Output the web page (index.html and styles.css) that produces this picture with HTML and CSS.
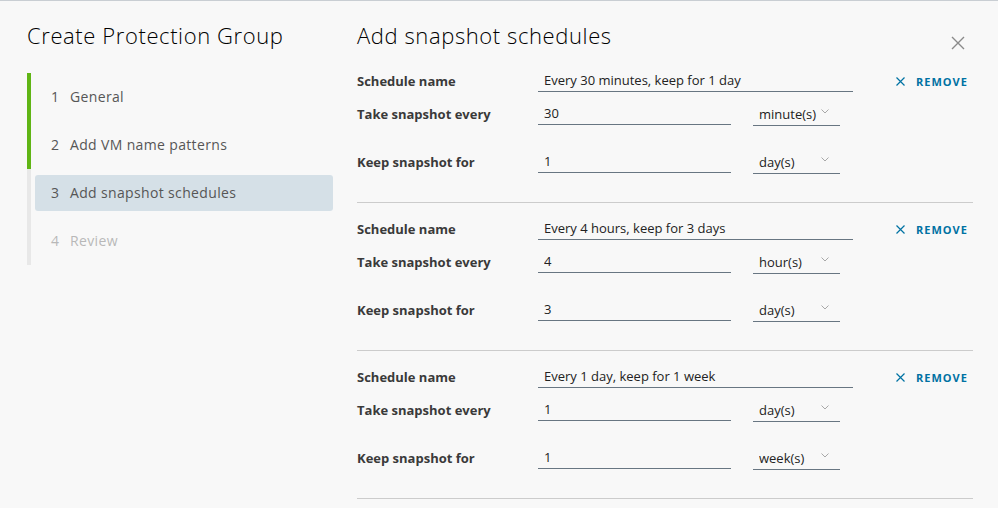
FILE: index.html
```html
<!DOCTYPE html>
<html lang="en">
<head>
    <meta charset="UTF-8">
    <meta name="viewport" content="width=device-width, initial-scale=1.0">
    <title>Create Protection Group</title>
    <link rel="stylesheet" href="styles.css">
</head>
<body>
    <div class="wizard">
        <aside class="wizard-nav">
            <h1 class="wizard-title">Create Protection Group</h1>
            <ol class="steps">
                <li class="step done"><span class="step-link"><span class="step-num">1</span>General</span></li>
                <li class="step done"><span class="step-link"><span class="step-num">2</span>Add VM name patterns</span></li>
                <li class="step current"><span class="step-link"><span class="step-num">3</span>Add snapshot schedules</span></li>
                <li class="step todo"><span class="step-link"><span class="step-num">4</span>Review</span></li>
            </ol>
        </aside>

        <main class="wizard-page">
            <header class="page-header">
                <h2 class="page-title">Add snapshot schedules</h2>
                <button class="close-btn" type="button" aria-label="Close">
                    <svg width="14" height="14" viewBox="0 0 14 14"><path d="M1 1L13 13M13 1L1 13" stroke="#8a8a8a" stroke-width="1.4" fill="none"/></svg>
                </button>
            </header>

            <section class="schedule">
                <div class="row">
                    <label class="row-label">Schedule name</label>
                    <input class="field field-name" type="text" value="Every 30 minutes, keep for 1 day">
                    <button class="remove-btn" type="button">
                        <svg width="9" height="9" viewBox="0 0 9 9"><path d="M0.5 0.5L8.5 8.5M8.5 0.5L0.5 8.5" stroke="currentColor" stroke-width="1.2" fill="none"/></svg>
                        Remove
                    </button>
                </div>
                <div class="row row-every">
                    <label class="row-label">Take snapshot every</label>
                    <input class="field field-num" type="text" value="30">
                    <div class="select-wrap">
                        <select class="field field-unit"><option>minute(s)</option></select>
                        <svg class="chevron" width="8" height="5" viewBox="0 0 8 5"><path d="M0.5 0.5L4 4L7.5 0.5" stroke="#a8a8a8" stroke-width="1" fill="none"/></svg>
                    </div>
                </div>
                <div class="row row-keep">
                    <label class="row-label">Keep snapshot for</label>
                    <input class="field field-num" type="text" value="1">
                    <div class="select-wrap">
                        <select class="field field-unit"><option>day(s)</option></select>
                        <svg class="chevron" width="8" height="5" viewBox="0 0 8 5"><path d="M0.5 0.5L4 4L7.5 0.5" stroke="#a8a8a8" stroke-width="1" fill="none"/></svg>
                    </div>
                </div>
            </section>

            <section class="schedule">
                <div class="row">
                    <label class="row-label">Schedule name</label>
                    <input class="field field-name" type="text" value="Every 4 hours, keep for 3 days">
                    <button class="remove-btn" type="button">
                        <svg width="9" height="9" viewBox="0 0 9 9"><path d="M0.5 0.5L8.5 8.5M8.5 0.5L0.5 8.5" stroke="currentColor" stroke-width="1.2" fill="none"/></svg>
                        Remove
                    </button>
                </div>
                <div class="row row-every">
                    <label class="row-label">Take snapshot every</label>
                    <input class="field field-num" type="text" value="4">
                    <div class="select-wrap">
                        <select class="field field-unit"><option>hour(s)</option></select>
                        <svg class="chevron" width="8" height="5" viewBox="0 0 8 5"><path d="M0.5 0.5L4 4L7.5 0.5" stroke="#a8a8a8" stroke-width="1" fill="none"/></svg>
                    </div>
                </div>
                <div class="row row-keep">
                    <label class="row-label">Keep snapshot for</label>
                    <input class="field field-num" type="text" value="3">
                    <div class="select-wrap">
                        <select class="field field-unit"><option>day(s)</option></select>
                        <svg class="chevron" width="8" height="5" viewBox="0 0 8 5"><path d="M0.5 0.5L4 4L7.5 0.5" stroke="#a8a8a8" stroke-width="1" fill="none"/></svg>
                    </div>
                </div>
            </section>

            <section class="schedule">
                <div class="row">
                    <label class="row-label">Schedule name</label>
                    <input class="field field-name" type="text" value="Every 1 day, keep for 1 week">
                    <button class="remove-btn" type="button">
                        <svg width="9" height="9" viewBox="0 0 9 9"><path d="M0.5 0.5L8.5 8.5M8.5 0.5L0.5 8.5" stroke="currentColor" stroke-width="1.2" fill="none"/></svg>
                        Remove
                    </button>
                </div>
                <div class="row row-every">
                    <label class="row-label">Take snapshot every</label>
                    <input class="field field-num" type="text" value="1">
                    <div class="select-wrap">
                        <select class="field field-unit"><option>day(s)</option></select>
                        <svg class="chevron" width="8" height="5" viewBox="0 0 8 5"><path d="M0.5 0.5L4 4L7.5 0.5" stroke="#a8a8a8" stroke-width="1" fill="none"/></svg>
                    </div>
                </div>
                <div class="row row-keep">
                    <label class="row-label">Keep snapshot for</label>
                    <input class="field field-num" type="text" value="1">
                    <div class="select-wrap">
                        <select class="field field-unit"><option>week(s)</option></select>
                        <svg class="chevron" width="8" height="5" viewBox="0 0 8 5"><path d="M0.5 0.5L4 4L7.5 0.5" stroke="#a8a8a8" stroke-width="1" fill="none"/></svg>
                    </div>
                </div>
            </section>
        </main>
    </div>
</body>
</html>
```

FILE: styles.css
```css
html, body {
    margin: 0;
    height: 100%;
    overflow: hidden;
}
body {
    box-sizing: border-box;
    background-color: #f8f8f8;
    border-top: 1px solid #c9ced3;
    font-family: "Open Sans", "Noto Sans", sans-serif;
    color: #333;
}
.wizard {
    display: flex;
    height: 100%;
}

/* left step navigation */
.wizard-nav {
    flex: none;
    width: 306px;
    padding-left: 27px;
}
.wizard-title {
    margin: 20px 0 0;
    font-size: 22px;
    font-weight: 300;
    line-height: 28px;
    letter-spacing: 0.6px;
    color: #000;
}
.steps {
    list-style: none;
    margin: 24px 0 0;
    padding: 0;
}
.step {
    display: flex;
    align-items: center;
    height: 48px;
    padding-left: 4px;
    border-left: 4px solid #e8e8e8;
    font-size: 14px;
    letter-spacing: 0.35px;
    color: #565656;
}
.step.done {
    border-left-color: #60b515;
}
.step.todo {
    color: #b8b8b8;
}
.step-link {
    display: flex;
    align-items: center;
    flex: 1;
    box-sizing: border-box;
    height: 36px;
    padding: 0 0 2px 16px;
    border-radius: 3px;
}
.step.current .step-link {
    background-color: #d5e0e7;
}
.step-num {
    width: 19px;
}

/* right page */
.wizard-page {
    flex: 1;
    margin-left: 24px;
    margin-right: 25px;
}
.page-header {
    display: flex;
    justify-content: space-between;
    align-items: flex-start;
    padding-top: 20px;
}
.page-title {
    margin: 0;
    font-size: 22px;
    font-weight: 300;
    line-height: 28px;
    letter-spacing: 0.6px;
    color: #000;
}
.close-btn {
    display: flex;
    align-items: center;
    justify-content: center;
    width: 24px;
    height: 24px;
    margin: 10px 3px 0 0;
    padding: 0;
    border: none;
    background: none;
    cursor: pointer;
}

.schedule {
    padding: 10px 0 24px;
    border-bottom: 1px solid #cccccc;
}
.row {
    display: flex;
    align-items: center;
    height: 32px;
}
.row-every {
    margin-top: 1px;
}
.row-keep {
    margin-top: 16px;
}
.row-label {
    width: 181px;
    flex: none;
    font-size: 13px;
    font-weight: bold;
    color: #3a3a3a;
}
.field {
    box-sizing: border-box;
    height: 22px;
    padding: 0 6px 1px;
    border: none;
    border-bottom: 1px solid #687682;
    border-radius: 0;
    background: transparent;
    font-family: inherit;
    font-size: 13px;
    color: #222;
    outline: none;
}
.field-name {
    width: 315px;
}
.field-num {
    width: 193px;
}
.select-wrap {
    position: relative;
    margin-left: 22px;
}
.field-unit {
    width: 87px;
    appearance: none;
    -webkit-appearance: none;
}
.chevron {
    position: absolute;
    right: 11px;
    top: 7px;
    pointer-events: none;
}
.remove-btn {
    display: flex;
    align-items: center;
    gap: 11px;
    margin-left: 43px;
    padding: 0;
    border: none;
    background: none;
    font-family: inherit;
    font-size: 11px;
    font-weight: bold;
    letter-spacing: 1px;
    text-transform: uppercase;
    color: #0072a3;
    cursor: pointer;
}
```
